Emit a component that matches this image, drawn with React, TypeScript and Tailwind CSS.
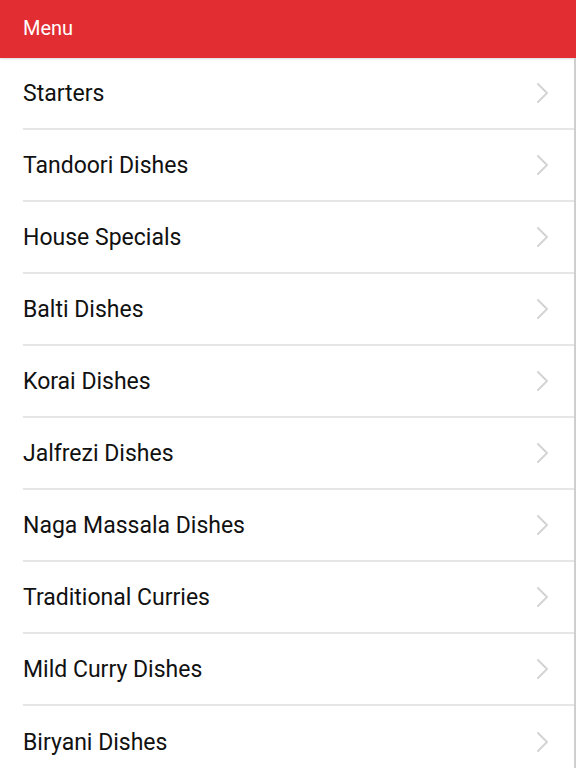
const items = [
  "Starters",
  "Tandoori Dishes",
  "House Specials",
  "Balti Dishes",
  "Korai Dishes",
  "Jalfrezi Dishes",
  "Naga Massala Dishes",
  "Traditional Curries",
  "Mild Curry Dishes",
  "Biryani Dishes",
];

function Chevron() {
  return (
    <svg width="14" height="22" viewBox="0 0 14 22" fill="none" className="mr-[24px] shrink-0">
      <path d="M2 2l9 9-9 9" stroke="#d4d4d4" strokeWidth="2" strokeLinecap="round" strokeLinejoin="round" />
    </svg>
  );
}

export default function App() {
  return (
    <div className="w-[576px] h-[768px] overflow-hidden bg-white font-['Roboto',sans-serif] flex flex-col">
      {/* Header */}
      <div className="h-[58px] bg-[#e22d33] flex items-center px-[23px] pb-[2px] shrink-0 shadow-[0_1px_2px_rgba(0,0,0,0.15)]">
        <span className="text-white text-[20px]">Menu</span>
      </div>

      {/* List */}
      <div className="flex-1 border-r-2 border-[#cfcfcf]">
        {items.map((name, i) => (
          <div key={name} className="pl-[23px]">
            <div
              className={
                "h-[72px] flex items-center justify-between " +
                (i < items.length - 1 ? "border-b-2 border-[#e6e6e6]" : "")
              }
            >
              <span className="text-[23px] text-[#111] pt-[2px]">{name}</span>
              <Chevron />
            </div>
          </div>
        ))}
      </div>
    </div>
  );
}
